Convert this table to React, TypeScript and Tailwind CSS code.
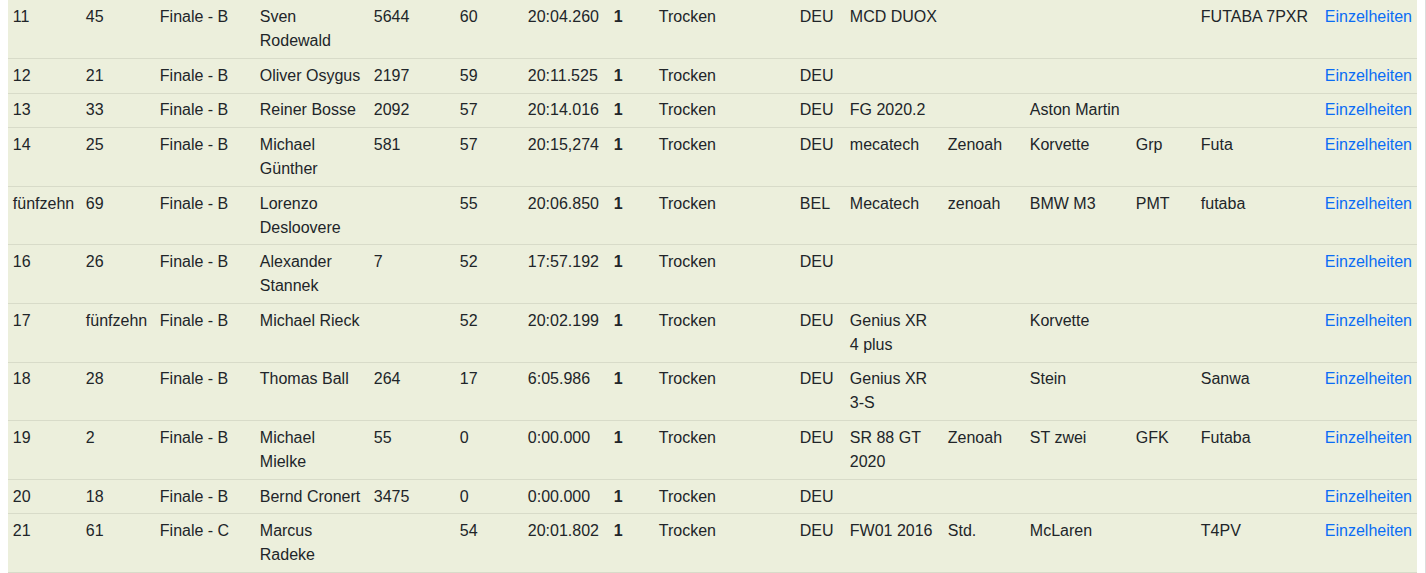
import React from "react";

type Row = string[];

const rows: Row[] = [
  ["11", "45", "Finale - B", "Sven Rodewald", "5644", "60", "20:04.260", "1", "Trocken", "DEU", "MCD DUOX", "", "", "", "FUTABA 7PXR"],
  ["12", "21", "Finale - B", "Oliver Osygus", "2197", "59", "20:11.525", "1", "Trocken", "DEU", "", "", "", "", ""],
  ["13", "33", "Finale - B", "Reiner Bosse", "2092", "57", "20:14.016", "1", "Trocken", "DEU", "FG 2020.2", "", "Aston Martin", "", ""],
  ["14", "25", "Finale - B", "Michael Günther", "581", "57", "20:15,274", "1", "Trocken", "DEU", "mecatech", "Zenoah", "Korvette", "Grp", "Futa"],
  ["fünfzehn", "69", "Finale - B", "Lorenzo Desloovere", "", "55", "20:06.850", "1", "Trocken", "BEL", "Mecatech", "zenoah", "BMW M3", "PMT", "futaba"],
  ["16", "26", "Finale - B", "Alexander Stannek", "7", "52", "17:57.192", "1", "Trocken", "DEU", "", "", "", "", ""],
  ["17", "fünfzehn", "Finale - B", "Michael Rieck", "", "52", "20:02.199", "1", "Trocken", "DEU", "Genius XR 4 plus", "", "Korvette", "", ""],
  ["18", "28", "Finale - B", "Thomas Ball", "264", "17", "6:05.986", "1", "Trocken", "DEU", "Genius XR 3-S", "", "Stein", "", "Sanwa"],
  ["19", "2", "Finale - B", "Michael Mielke", "55", "0", "0:00.000", "1", "Trocken", "DEU", "SR 88 GT 2020", "Zenoah", "ST zwei", "GFK", "Futaba"],
  ["20", "18", "Finale - B", "Bernd Cronert", "3475", "0", "0:00.000", "1", "Trocken", "DEU", "", "", "", "", ""],
  ["21", "61", "Finale - C", "Marcus Radeke", "", "54", "20:01.802", "1", "Trocken", "DEU", "FW01 2016", "Std.", "McLaren", "", "T4PV"],
];

const widths = [73, 74, 100, 114, 86, 68, 86, 45, 141, 50, 98, 82, 106, 65, 124, 97];

export default function App() {
  return (
    <div className="w-[1426px] h-[573px] overflow-hidden bg-white font-['Liberation_Sans',Arial,sans-serif] text-[16px] leading-[24px] text-[#212529]">
      <div className="flex">
        <div className="w-[8px] shrink-0" />
        <table className="table-fixed border-collapse w-[1409px] bg-[#ecefdc] mt-[0.4px]">
          <colgroup>
            {widths.map((w, i) => (
              <col key={i} style={{ width: w }} />
            ))}
          </colgroup>
          <tbody>
            {rows.map((r, ri) => (
              <tr key={ri} className="border-b border-[#d8dbc9]">
                {r.map((c, ci) => (
                  <td
                    key={ci}
                    className={`align-top px-[4.8px] pt-[4.8px] pb-[4.8px] ${ci === 7 ? "font-bold" : ""}`}
                  >
                    {c}
                  </td>
                ))}
                <td className="align-top px-[4.8px] py-[4.8px] text-[#0a6cf5] whitespace-nowrap">
                  Einzelheiten
                </td>
              </tr>
            ))}
          </tbody>
        </table>
        <div className="flex-1" />
        <div className="w-px h-[573px] bg-[#dcdcdc]" />
      </div>
    </div>
  );
}
